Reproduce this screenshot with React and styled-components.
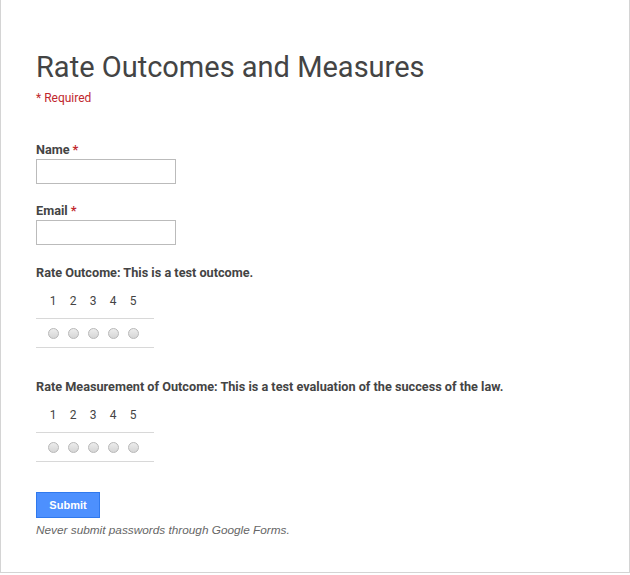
import React from "react";
import styled, { createGlobalStyle } from "styled-components";

const GlobalStyle = createGlobalStyle`
  html, body {
    margin: 0;
    padding: 0;
    background: #ffffff;
  }
  body {
    font-family: Roboto, "Liberation Sans", Arial, sans-serif;
    color: #444;
  }
`;

const Card = styled.div`
  box-sizing: border-box;
  width: 630px;
  height: 573px;
  border: 1px solid #d4d4d4;
  border-top: none;
  background: #fff;
  padding: 50px 0 0 35px;
`;

const Title = styled.h1`
  margin: 0;
  font-size: 29px;
  font-weight: 400;
  line-height: 34px;
  color: #444;
`;

const Required = styled.div`
  margin-top: 6px;
  font-size: 12px;
  line-height: 16px;
  color: #c1272d;
`;

const Fields = styled.div`
  margin-top: 36px;
  display: flex;
  flex-direction: column;
`;

const Item = styled.div`
  margin-bottom: ${(p) => p.$gap || 0}px;
`;

const Label = styled.div`
  font-size: 12.7px;
  font-weight: 700;
  line-height: 16px;
  color: #444;
  margin-bottom: 1px;
`;

const Star = styled.span`
  color: #c1272d;
  margin-left: 3px;
`;

const TextInput = styled.input`
  box-sizing: border-box;
  display: block;
  width: 140px;
  height: 25px;
  border: 1px solid #bbb;
  margin: 0;
`;

const Scale = styled.div`
  width: 118px;
  margin-top: 11px;
`;

const ScaleRow = styled.div`
  box-sizing: border-box;
  display: flex;
  padding: 0 0 ${(p) => p.$pb || 0}px 7px;
  height: ${(p) => p.$h}px;
  align-items: center;
  border-bottom: 1px solid #d8d8d8;
`;

const Cell = styled.div`
  width: 20px;
  display: flex;
  justify-content: center;
  font-size: 12px;
  color: #444;
`;

const Radio = styled.span`
  box-sizing: border-box;
  width: 11px;
  height: 11px;
  border-radius: 50%;
  border: 1px solid #b8b8b8;
  background: linear-gradient(#ececec, #d6d6d6);
`;

const Submit = styled.button`
  box-sizing: border-box;
  width: 64px;
  height: 26px;
  margin-top: 30px;
  border: 1px solid #3079ed;
  background: #4d90fe;
  color: #fff;
  font-family: "Liberation Sans", Arial, sans-serif;
  font-size: 11px;
  font-weight: 700;
  padding: 0;
  cursor: pointer;
`;

const Note = styled.div`
  margin-top: 5px;
  font-family: "Liberation Sans", Arial, sans-serif;
  font-style: italic;
  font-size: 11.8px;
  color: #666;
`;

function RatingScale() {
  const values = [1, 2, 3, 4, 5];
  return (
    <Scale>
      <ScaleRow $h={27} $pb={8}>
        {values.map((v) => (
          <Cell key={v}>{v}</Cell>
        ))}
      </ScaleRow>
      <ScaleRow $h={29}>
        {values.map((v) => (
          <Cell key={v}>
            <Radio />
          </Cell>
        ))}
      </ScaleRow>
    </Scale>
  );
}

export default function App() {
  return (
    <>
      <GlobalStyle />
      <Card>
        <Title>Rate Outcomes and Measures</Title>
        <Required>* Required</Required>
        <Fields>
          <Item $gap={19}>
            <Label>
              Name<Star>*</Star>
            </Label>
            <TextInput type="text" />
          </Item>
          <Item $gap={20}>
            <Label>
              Email<Star>*</Star>
            </Label>
            <TextInput type="text" />
          </Item>
          <Item $gap={31}>
            <Label>Rate Outcome: This is a test outcome.</Label>
            <RatingScale />
          </Item>
          <Item>
            <Label>
              Rate Measurement of Outcome: This is a test evaluation of the
              success of the law.
            </Label>
            <RatingScale />
          </Item>
        </Fields>
        <Submit>Submit</Submit>
        <Note>Never submit passwords through Google Forms.</Note>
      </Card>
    </>
  );
}
